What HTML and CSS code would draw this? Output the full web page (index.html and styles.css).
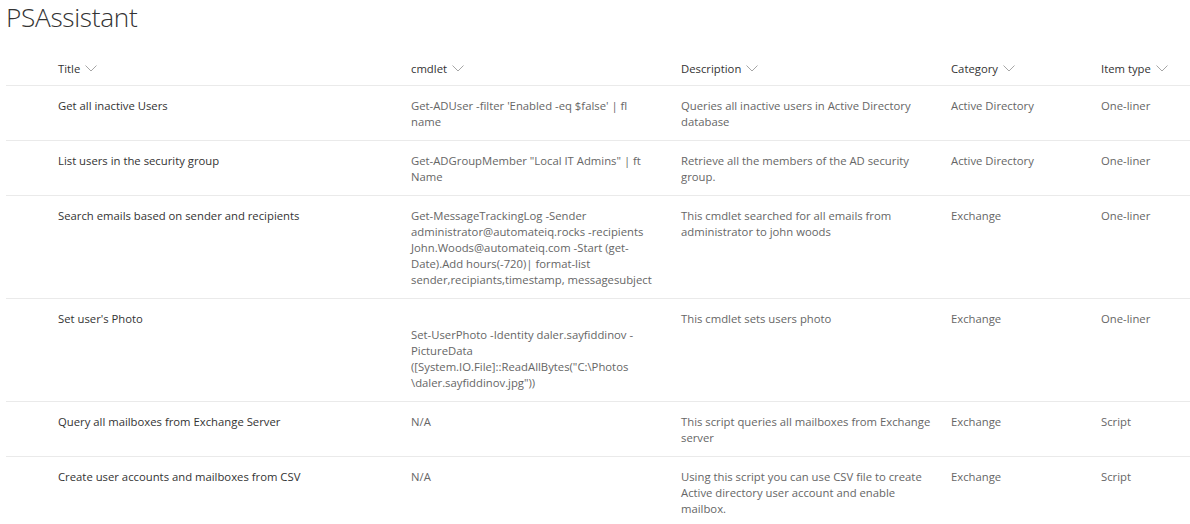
FILE: index.html
```html
<!DOCTYPE html>
<html>
<head>
<meta charset="utf-8">
<link rel="stylesheet" href="styles.css">
</head>
<body>
<h1 class="page-title">PSAssistant</h1>
<div class="list">
  <div class="row head">
    <div class="hcell">Title <svg class="chev" viewBox="0 0 12 7"><polyline points="0.5,0.5 6,6 11.5,0.5"/></svg></div>
    <div class="hcell">cmdlet <svg class="chev" viewBox="0 0 12 7"><polyline points="0.5,0.5 6,6 11.5,0.5"/></svg></div>
    <div class="hcell">Description <svg class="chev" viewBox="0 0 12 7"><polyline points="0.5,0.5 6,6 11.5,0.5"/></svg></div>
    <div class="hcell">Category <svg class="chev" viewBox="0 0 12 7"><polyline points="0.5,0.5 6,6 11.5,0.5"/></svg></div>
    <div class="hcell">Item type <svg class="chev" viewBox="0 0 12 7"><polyline points="0.5,0.5 6,6 11.5,0.5"/></svg></div>
  </div>
  <div class="row">
    <div class="cell title">Get all inactive Users</div>
    <div class="cell">Get-ADUser -filter 'Enabled -eq $false' | fl<br>name</div>
    <div class="cell">Queries all inactive users in Active Directory<br>database</div>
    <div class="cell">Active Directory</div>
    <div class="cell">One-liner</div>
  </div>
  <div class="row">
    <div class="cell title">List users in the security group</div>
    <div class="cell">Get-ADGroupMember "Local IT Admins" | ft<br>Name</div>
    <div class="cell">Retrieve all the members of the AD security<br>group.</div>
    <div class="cell">Active Directory</div>
    <div class="cell">One-liner</div>
  </div>
  <div class="row">
    <div class="cell title">Search emails based on sender and recipients</div>
    <div class="cell">Get-MessageTrackingLog -Sender<br>administrator@automateiq.rocks -recipients<br>John.Woods@automateiq.com -Start (get-<br>Date).Add hours(-720)| format-list<br>sender,recipiants,timestamp, messagesubject</div>
    <div class="cell">This cmdlet searched for all emails from<br>administrator to john woods</div>
    <div class="cell">Exchange</div>
    <div class="cell">One-liner</div>
  </div>
  <div class="row">
    <div class="cell title">Set user's Photo</div>
    <div class="cell"><br>Set-UserPhoto -Identity daler.sayfiddinov -<br>PictureData<br>([System.IO.File]::ReadAllBytes("C:\Photos<br>\daler.sayfiddinov.jpg"))</div>
    <div class="cell">This cmdlet sets users photo</div>
    <div class="cell">Exchange</div>
    <div class="cell">One-liner</div>
  </div>
  <div class="row">
    <div class="cell title">Query all mailboxes from Exchange Server</div>
    <div class="cell">N/A</div>
    <div class="cell">This script queries all mailboxes from Exchange<br>server</div>
    <div class="cell">Exchange</div>
    <div class="cell">Script</div>
  </div>
  <div class="row">
    <div class="cell title">Create user accounts and mailboxes from CSV</div>
    <div class="cell">N/A</div>
    <div class="cell">Using this script you can use CSV file to create<br>Active directory user account and enable<br>mailbox.</div>
    <div class="cell">Exchange</div>
    <div class="cell">Script</div>
  </div>
</div>
</body>
</html>
```
FILE: styles.css
```css
html, body {
  margin: 0;
  padding: 0;
  background: #ffffff;
}
body {
  font-family: "Open Sans", "Noto Sans", sans-serif;
  font-size: 11.3px;
  color: #666666;
  overflow: hidden;
}
.page-title {
  margin: 0;
  height: 43px;
  padding-left: 6px;
  font-size: 26.2px;
  font-weight: 300;
  line-height: 34px;
  color: #333333;
  letter-spacing: -0.3px;
}
.list {
  margin-left: 6px;
}
.row {
  display: grid;
  grid-template-columns: 353px 270px 270px 150px 1fr;
  padding-left: 52px;
  border-bottom: 1px solid #eaeaea;
}
.row.head {
  box-sizing: border-box;
  height: 43px;
  padding-top: 8px;
  align-items: center;
}
.hcell {
  display: flex;
  align-items: center;
  color: #333333;
  white-space: nowrap;
}
.chev {
  width: 12px;
  height: 7px;
  margin-left: 5px;
  fill: none;
  stroke: #a6a6a6;
  stroke-width: 1;
}
.cell {
  padding: 12px 20px 10px 0;
  line-height: 16px;
  white-space: nowrap;
}
.cell.title {
  color: #333333;
}
```
